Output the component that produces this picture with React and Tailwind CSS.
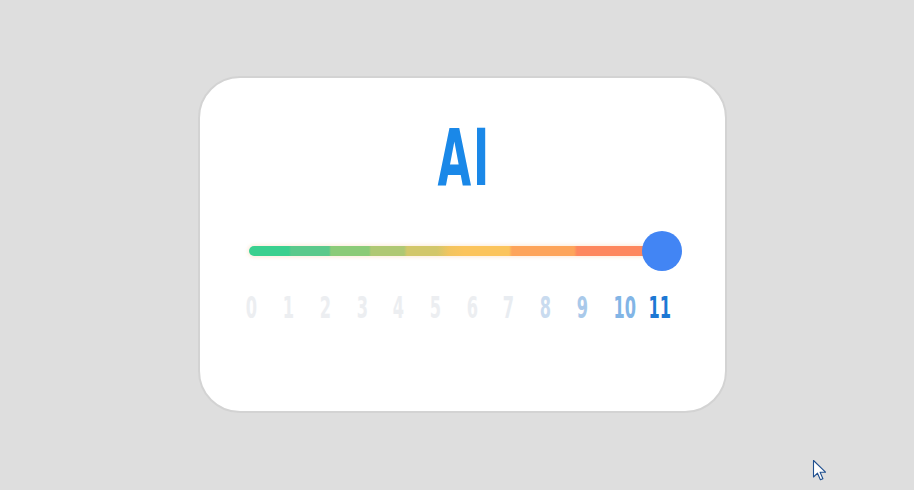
import React from "react";

const ticks = [
  { n: "0", w: "w-[36.7px]", c: "text-[#eceef1]" },
  { n: "1", w: "w-[36.7px]", c: "text-[#eceef1]" },
  { n: "2", w: "w-[36.7px]", c: "text-[#eceef1]" },
  { n: "3", w: "w-[36.7px]", c: "text-[#eceef1]" },
  { n: "4", w: "w-[36.7px]", c: "text-[#eceef1]" },
  { n: "5", w: "w-[36.7px]", c: "text-[#eceef1]" },
  { n: "6", w: "w-[36.7px]", c: "text-[#eceef1]" },
  { n: "7", w: "w-[36.7px]", c: "text-[#e8ecf1]" },
  { n: "8", w: "w-[36.7px]", c: "text-[#c9dbef]" },
  { n: "9", w: "w-[36.7px]", c: "text-[#a9c9ea]" },
  { n: "10", w: "w-[49px]", c: "text-[#82b5e6]" },
  { n: "11", w: "w-[21px]", c: "text-[#1d78d4]" },
];

const trackGradient =
  "bg-[linear-gradient(to_right,#3bd08f_0px,#3bd08f_40px,#5bc98b_42px,#5bc98b_80px,#8bcb78_82px,#8bcb78_120px,#afc873_122px,#afc873_155px,#d2c76a_158px,#d2c76a_188px,#f2c45e_200px,#fbc45c_215px,#fbc45c_260px,#fda45a_263px,#fda45a_325px,#fd875e_328px,#fd875e_100%)]";

const condensed = '"Liberation Sans Narrow", "DejaVu Sans Condensed", "Liberation Sans", sans-serif';

function Cursor() {
  return (
    <svg
      className="absolute left-[812px] top-[459px]"
      width="16"
      height="24"
      viewBox="0 0 16 24"
    >
      <path
        d="M1.5 1.5 L1.5 18 L5.5 14.2 L8.4 20.8 L10.9 19.7 L8.1 13.2 L13.5 13.2 Z"
        fill="#ffffff"
        stroke="#1f4f8f"
        strokeWidth="1.1"
        strokeLinejoin="round"
      />
    </svg>
  );
}

export default function App() {
  return (
    <div className="relative w-[914px] h-[490px] bg-[#dedede] overflow-hidden pt-[76px] pl-[198px]">
      <div className="w-[529px] h-[337px] bg-white rounded-[42px] border-2 border-[#d3d3d3] flex flex-col">
        <div
          className="flex justify-center pt-[41px] pl-[4px] h-[153px] text-[#1a88e8] font-bold leading-none text-[78px] tracking-[3px]"
          style={{ fontFamily: condensed }}
        >
          <span className="inline-block scale-x-[0.62]">AI</span>
        </div>
        <div className="relative ml-[49px] w-[433px] h-[40px] flex items-center">
          <div
            className={`h-[10px] w-[410px] rounded-full shadow-[0_0_3px_2px_rgba(253,200,150,0.25)] ${trackGradient}`}
          />
          <div className="absolute right-0 top-0 w-[40px] h-[40px] rounded-full bg-[#4285f4]" />
        </div>
        <div
          className="flex ml-[33.5px] mt-[22px] font-bold leading-none text-[30px]"
          style={{ fontFamily: condensed }}
        >
          {ticks.map((t) => (
            <div key={t.n} className={`${t.w} flex justify-center ${t.c}`}>
              <span className="inline-block scale-x-[0.6]">{t.n}</span>
            </div>
          ))}
        </div>
      </div>
      <Cursor />
    </div>
  );
}
